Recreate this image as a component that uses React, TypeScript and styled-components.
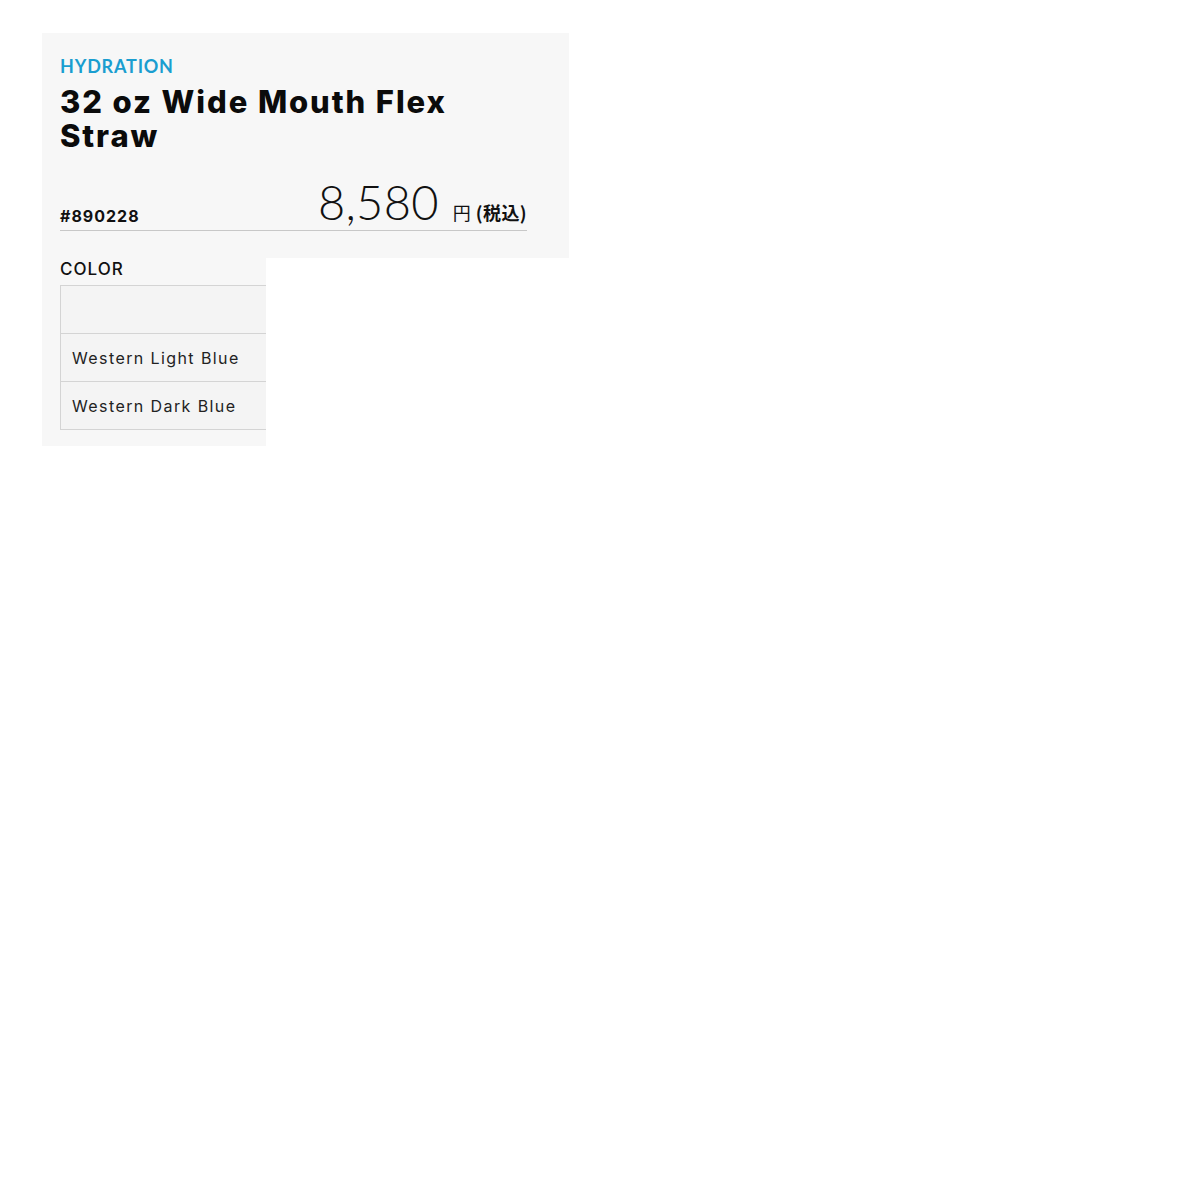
import styled, { createGlobalStyle } from "styled-components";

const GlobalStyle = createGlobalStyle`
  html, body {
    margin: 0;
    padding: 0;
    background: #ffffff;
    font-family: "Inter", "Noto Sans CJK JP", sans-serif;
    color: #111;
  }
`;

const Page = styled.div`
  padding: 33px 0 0 42px;
`;

const Summary = styled.section`
  width: 467px;
  padding: 22px 42px 27px 18px;
  background: #f7f7f7;
`;

const Category = styled.div`
  font-family: "Lato", sans-serif;
  font-size: 18px;
  font-weight: 700;
  letter-spacing: 0.8px;
  color: #1a9ed0;
  line-height: 22px;
`;

const Title = styled.h1`
  margin: 8px 0 0;
  font-size: 31px;
  font-weight: 800;
  line-height: 34px;
  letter-spacing: 1.9px;
  color: #0b0b0b;
`;

const PriceRow = styled.div`
  display: flex;
  align-items: flex-end;
  justify-content: space-between;
  margin-top: 25px;
  padding-bottom: 4px;
  border-bottom: 1px solid #c8c8c8;
`;

const Sku = styled.div`
  font-size: 16px;
  font-weight: 700;
  line-height: 20px;
  letter-spacing: 1px;
`;

const Price = styled.div`
  display: flex;
  align-items: baseline;
`;

const Amount = styled.span`
  font-family: "Lato", sans-serif;
  font-size: 47px;
  font-weight: 300;
  line-height: 48px;
  letter-spacing: 0.3px;
`;

const Yen = styled.span`
  margin-left: 14px;
  font-size: 18px;
  font-family: "Noto Sans CJK JP", sans-serif;
  font-weight: 400;
`;

const Tax = styled.span`
  margin-left: 5px;
  font-size: 18px;
  font-family: "Noto Sans CJK JP", sans-serif;
  font-weight: 700;
  letter-spacing: 0.4px;
`;

const ColorSection = styled.section`
  width: 206px;
  padding: 0 0 16px 18px;
  background: #f7f7f7;
  overflow: hidden;
`;

const Label = styled.div`
  padding-top: 1px;
  font-size: 17px;
  font-weight: 500;
  line-height: 20px;
  letter-spacing: 1px;
  margin-bottom: 6px;
`;

const Table = styled.div`
  width: 300px;
  border-left: 1px solid #d4d4d4;
  border-top: 1px solid #d4d4d4;
`;

const Row = styled.div`
  height: 47px;
  display: flex;
  align-items: center;
  padding-left: 11px;
  border-bottom: 1px solid #d4d4d4;
  background: #f4f4f4;
  font-size: 16px;
  letter-spacing: 1.4px;
  color: #222;
`;

const colors = ["", "Western Light Blue", "Western Dark Blue"];

export default function App() {
  return (
    <>
      <GlobalStyle />
      <Page>
        <Summary>
          <Category>HYDRATION</Category>
          <Title>
            32 oz Wide Mouth Flex
            <br />
            Straw
          </Title>
          <PriceRow>
            <Sku>#890228</Sku>
            <Price>
              <Amount>8,580</Amount>
              <Yen>円</Yen>
              <Tax>(税込)</Tax>
            </Price>
          </PriceRow>
        </Summary>
        <ColorSection>
          <Label>COLOR</Label>
          <Table>
            {colors.map((c, i) => (
              <Row key={i}>{c}</Row>
            ))}
          </Table>
        </ColorSection>
      </Page>
    </>
  );
}
